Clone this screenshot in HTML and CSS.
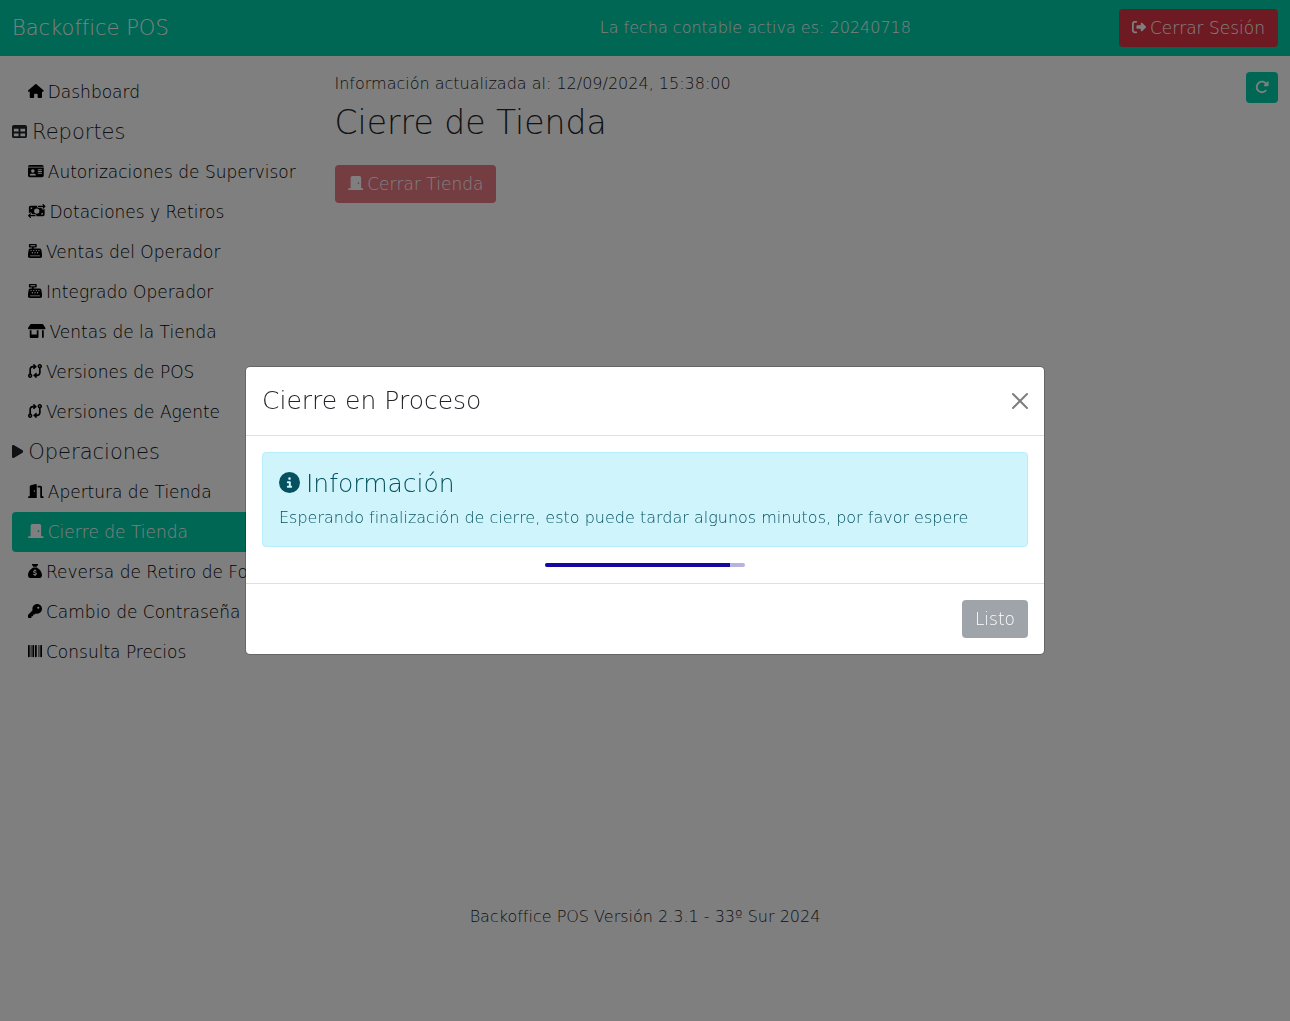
FILE: index.html
```html
<!DOCTYPE html>
<html lang="es">
<head>
<meta charset="utf-8">
<meta name="viewport" content="width=device-width, initial-scale=1">
<title>Backoffice POS</title>
<link rel="stylesheet" href="styles.css">
</head>
<body>
<svg class="sprite" aria-hidden="true">
  <symbol id="i-register" viewBox="0 0 512 512"><path d="M64 0C46.3 0 32 14.3 32 32V96c0 17.700 14.300 32 32 32h80v32H87c-31.600 0-58.500 23.100-63.300 54.400L1.100 364.100C.4 368.800 0 373.600 0 378.400V448c0 35.300 28.700 64 64 64H448c35.300 0 64-28.700 64-64V378.400c0-4.800-.4-9.600-1.100-14.400L488.200 214.400C483.500 183.100 456.600 160 425 160H208V128h80c17.700 0 32-14.300 32-32V32c0-17.700-14.300-32-32-32H64zM96 48H256c8.800 0 16 7.200 16 16s-7.200 16-16 16H96c-8.800 0-16-7.200-16-16s7.200-16 16-16zM64 432c0-8.800 7.200-16 16-16H432c8.800 0 16 7.200 16 16s-7.200 16-16 16H80c-8.800 0-16-7.200-16-16zm48-168a24 24 0 1 1 0-48 24 24 0 1 1 0 48zm120-24a24 24 0 1 1 -48 0 24 24 0 1 1 48 0zM160 344a24 24 0 1 1 0-48 24 24 0 1 1 0 48zM328 240a24 24 0 1 1 -48 0 24 24 0 1 1 48 0zM256 344a24 24 0 1 1 0-48 24 24 0 1 1 0 48zM424 240a24 24 0 1 1 -48 0 24 24 0 1 1 48 0zM352 344a24 24 0 1 1 0-48 24 24 0 1 1 0 48z"/></symbol>
  <symbol id="i-compare" viewBox="0 0 512 512"><path d="M320 488c0 9.500-5.600 18.100-14.200 21.900s-18.800 2.300-25.800-4.100l-80-72c-5.100-4.600-7.900-11-7.900-17.800s2.900-13.300 7.900-17.800l80-72c7-6.300 17.200-7.900 25.800-4.100s14.200 12.400 14.200 21.900v40h16c35.300 0 64-28.700 64-64V153.300C371.700 141 352 112.800 352 80c0-44.200 35.800-80 80-80s80 35.800 80 80c0 32.800-19.700 61-48 73.300V320c0 70.700-57.300 128-128 128H320v40zM456 80a24 24 0 1 0 -48 0 24 24 0 1 0 48 0zM192 24c0-9.500 5.600-18.100 14.200-21.900s18.800-2.300 25.800 4.100l80 72c5.100 4.600 7.900 11 7.900 17.800s-2.900 13.300-7.900 17.800l-80 72c-7 6.300-17.200 7.900-25.800 4.100s-14.200-12.400-14.200-21.900V128H176c-35.300 0-64 28.700-64 64V358.700c28.300 12.300 48 40.500 48 73.300c0 44.200-35.800 80-80 80s-80-35.800-80-80c0-32.800 19.700-61 48-73.300V192c0-70.700 57.300-128 128-128h16V24zM56 432a24 24 0 1 0 48 0 24 24 0 1 0 -48 0z"/></symbol>
  <symbol id="i-door" viewBox="0 0 576 512"><path d="M96 64c0-35.300 28.700-64 64-64H416c35.300 0 64 28.700 64 64V448h64c17.700 0 32 14.300 32 32s-14.300 32-32 32H432 144 32c-17.700 0-32-14.300-32-32s14.300-32 32-32H96V64zM384 288a32 32 0 1 0 0-64 32 32 0 1 0 0 64z"/></symbol>
</svg>

<header class="topbar">
  <a class="brand" href="#">Backoffice POS</a>
  <span class="active-date">La fecha contable activa es: 20240718</span>
  <button class="btn btn-danger" type="button"><svg class="icon" viewBox="0 0 512 512" aria-hidden="true"><path d="M377.900 105.900L500.700 228.700c7.200 7.200 11.300 17.100 11.300 27.300s-4.100 20.100-11.300 27.300L377.900 406.100c-6.400 6.400-15 9.900-24 9.900c-18.700 0-33.900-15.200-33.900-33.900l0-62.100-128 0c-17.700 0-32-14.300-32-32l0-64c0-17.700 14.300-32 32-32l128 0 0-62.100c0-18.700 15.200-33.900 33.900-33.900c9 0 17.600 3.600 24 9.900zM160 96L96 96c-17.700 0-32 14.300-32 32l0 256c0 17.700 14.300 32 32 32l64 0c17.700 0 32 14.300 32 32s-14.300 32-32 32l-64 0c-53 0-96-43-96-96L0 128C0 75 43 32 96 32l64 0c17.700 0 32 14.300 32 32s-14.300 32-32 32z"/></svg>Cerrar Sesión</button>
</header>

<div class="layout">
  <nav class="sidebar" aria-label="Menú principal">
    <a class="nav-link" href="#"><svg class="icon" viewBox="0 0 576 512" aria-hidden="true"><path d="M575.800 255.500c0 18-15 32.100-32 32.100h-32l.7 160.200c0 2.700-.2 5.400-.5 8.100V472c0 22.100-17.900 40-40 40H392c-22.100 0-40-17.900-40-40V384c0-17.700-14.300-32-32-32H256c-17.700 0-32 14.300-32 32v88c0 22.100-17.900 40-40 40H104c-22.100 0-40-17.900-40-40V287.600H32c-18 0-32-14-32-32.100c0-9 3-17 10-24L266.400 8c7-7 15-8 22-8s15 2 21 7L564.800 231.500c8 7 12 15 11 24z"/></svg>Dashboard</a>
    <h2 class="nav-heading"><svg class="icon" viewBox="0 0 512 512" aria-hidden="true"><path d="M64 256V160H224v96H64zm0 64H224v96H64V320zm224 96V320H448v96H288zM448 256H288V160H448v96zM64 32C28.700 32 0 60.700 0 96V416c0 35.300 28.700 64 64 64H448c35.300 0 64-28.700 64-64V96c0-35.300-28.700-64-64-64H64z"/></svg>Reportes</h2>
    <a class="nav-link" href="#"><svg class="icon" viewBox="0 0 576 512" aria-hidden="true"><path d="M0 96l576 0c0-35.300-28.700-64-64-64H64C28.700 32 0 60.700 0 96zm0 32V416c0 35.300 28.700 64 64 64H512c35.300 0 64-28.700 64-64V128H0zM64 405.300c0-29.500 23.900-53.300 53.300-53.300H234.700c29.500 0 53.300 23.900 53.300 53.300c0 5.900-4.800 10.700-10.700 10.700H74.700c-5.900 0-10.700-4.800-10.700-10.700zM176 192a64 64 0 1 1 0 128 64 64 0 1 1 0-128zm176 16c0-8.800 7.200-16 16-16H496c8.800 0 16 7.200 16 16s-7.200 16-16 16H368c-8.800 0-16-7.200-16-16zm0 64c0-8.800 7.200-16 16-16H496c8.800 0 16 7.200 16 16s-7.200 16-16 16H368c-8.800 0-16-7.200-16-16zm0 64c0-8.800 7.200-16 16-16H496c8.800 0 16 7.200 16 16s-7.200 16-16 16H368c-8.800 0-16-7.200-16-16z"/></svg>Autorizaciones de Supervisor</a>
    <a class="nav-link" href="#"><svg class="icon" viewBox="0 0 640 512" aria-hidden="true"><path d="M535 41c-9.400-9.400-9.400-24.600 0-33.900s24.600-9.400 33.900 0l64 64c4.500 4.500 7 10.600 7 17s-2.500 12.500-7 17l-64 64c-9.400 9.400-24.600 9.400-33.900 0s-9.400-24.600 0-33.900l23-23L384 112c-13.300 0-24-10.700-24-24s10.700-24 24-24l174.100 0L535 41zM105 377l-23 23L256 400c13.300 0 24 10.700 24 24s-10.700 24-24 24L81.900 448l23 23c9.400 9.400 9.400 24.600 0 33.900s-24.600 9.400-33.900 0L7 441c-4.500-4.500-7-10.600-7-17s2.500-12.500 7-17l64-64c9.400-9.400 24.600-9.400 33.900 0s9.400 24.600 0 33.900zM96 64H337.900c-3.700 7.200-5.900 15.300-5.900 24c0 28.700 23.300 52 52 52l117.400 0c-4 17 .6 35.500 13.800 48.800c20.300 20.300 53.200 20.300 73.500 0L608 169.500V384c0 35.300-28.700 64-64 64H302.100c3.700-7.200 5.900-15.300 5.900-24c0-28.700-23.300-52-52-52l-117.400 0c4-17-.6-35.500-13.800-48.800c-20.300-20.300-53.200-20.300-73.500 0L32 342.500V128c0-35.300 28.700-64 64-64zm64 64H96v64c35.300 0 64-28.700 64-64zM544 320c-35.300 0-64 28.700-64 64h64V320zM320 352a96 96 0 1 0 0-192 96 96 0 1 0 0 192z"/></svg>Dotaciones y Retiros</a>
    <a class="nav-link" href="#"><svg class="icon" viewBox="0 0 512 512" aria-hidden="true"><use href="#i-register"/></svg>Ventas del Operador</a>
    <a class="nav-link" href="#"><svg class="icon" viewBox="0 0 512 512" aria-hidden="true"><use href="#i-register"/></svg>Integrado Operador</a>
    <a class="nav-link" href="#"><svg class="icon" viewBox="0 0 640 512" aria-hidden="true"><path d="M36.800 192H603.200c20.300 0 36.800-16.500 36.800-36.800c0-7.300-2.200-14.400-6.200-20.400L558.200 21.400C549.300 8 534.400 0 518.300 0H121.700c-16 0-31 8-39.900 21.400L6.200 134.700c-4 6.100-6.200 13.200-6.200 20.400C0 175.500 16.500 192 36.800 192zM64 224V384v80c0 26.500 21.500 48 48 48H336c26.500 0 48-21.500 48-48V384 224H320V384H128V224H64zm448 0V480c0 17.700 14.300 32 32 32s32-14.300 32-32V224H512z"/></svg>Ventas de la Tienda</a>
    <a class="nav-link" href="#"><svg class="icon" viewBox="0 0 512 512" aria-hidden="true"><use href="#i-compare"/></svg>Versiones de POS</a>
    <a class="nav-link" href="#"><svg class="icon" viewBox="0 0 512 512" aria-hidden="true"><use href="#i-compare"/></svg>Versiones de Agente</a>
    <h2 class="nav-heading"><svg class="icon" viewBox="0 0 384 512" aria-hidden="true"><path d="M73 39c-14.800-9.100-33.400-9.400-48.500-.9S0 62.600 0 80V432c0 17.400 9.400 33.400 24.500 41.900s33.700 8.100 48.500-.9L361 297c14.300-8.700 23-24.200 23-41s-8.700-32.200-23-41L73 39z"/></svg>Operaciones</h2>
    <a class="nav-link" href="#"><svg class="icon" viewBox="0 0 576 512" aria-hidden="true"><path d="M320 32c0-9.900-4.500-19.200-12.300-25.200S289.800-1.400 280.200 1l-179.900 45C79 51.300 64 70.500 64 92.500V448H32c-17.700 0-32 14.300-32 32s14.300 32 32 32H96 288h32V480 32zM256 256c0 17.700-10.700 32-24 32s-24-14.300-24-32s10.700-32 24-32s24 14.300 24 32zm96-128h96V480c0 17.700 14.300 32 32 32h64c17.700 0 32-14.300 32-32s-14.300-32-32-32H512V128c0-35.300-28.700-64-64-64H352v64z"/></svg>Apertura de Tienda</a>
    <a class="nav-link is-active" href="#" aria-current="page"><svg class="icon" viewBox="0 0 576 512" aria-hidden="true"><use href="#i-door"/></svg>Cierre de Tienda</a>
    <a class="nav-link" href="#"><svg class="icon" viewBox="0 0 512 512" aria-hidden="true"><path d="M320 96H192L144.600 24.900C137.500 14.200 145.100 0 157.900 0H354.100c12.800 0 20.400 14.200 13.300 24.900L320 96zM192 128H320c3.800 2.500 8.100 5.300 13 8.400C389.700 172.700 512 250.900 512 416c0 53-43 96-96 96H96c-53 0-96-43-96-96C0 250.900 122.300 172.700 179 136.400c4.800-3.100 9.200-5.900 13-8.400zm84 88c0-11-9-20-20-20s-20 9-20 20v14c-7.600 1.700-15.200 4.400-22.200 8.500c-13.900 8.300-25.900 22.800-25.800 43.900c.1 20.300 12 33.100 24.700 40.700c11 6.600 24.700 10.800 35.600 14l1.700 .5c12.600 3.800 21.800 6.800 28 10.700c5.100 3.200 5.800 5.400 5.900 8.200c.1 5-1.800 8-5.900 10.500c-5 3.100-12.900 5-21.400 4.700c-11.100-.4-21.500-3.900-35.100-8.500c-2.300-.8-4.700-1.600-7.200-2.400c-10.500-3.500-21.800 2.200-25.300 12.600s2.200 21.800 12.600 25.300c1.900 .6 4 1.300 6.100 2.100c8.300 2.900 17.900 6.200 28.200 8.400V424c0 11 9 20 20 20s20-9 20-20V410.200c8-1.700 16-4.500 23.200-9c14.300-8.900 25.100-24.100 24.800-45c-.3-20.300-11.700-33.400-24.600-41.600c-11.500-7.200-25.900-11.600-37.100-15l-.7-.2c-12.800-3.900-21.900-6.700-28.300-10.500c-5.200-3.100-5.300-4.900-5.300-6.700c0-3.700 1.400-6.500 6.200-9.300c5.400-3.200 13.600-5.100 21.500-5c9.600 .1 20.200 2.200 31.200 5.200c10.700 2.800 21.600-3.500 24.500-14.200s-3.500-21.600-14.200-24.500c-6.500-1.700-13.700-3.400-21.100-4.700V216z"/></svg>Reversa de Retiro de Fondos</a>
    <a class="nav-link" href="#"><svg class="icon" viewBox="0 0 512 512" aria-hidden="true"><path d="M336 352c97.200 0 176-78.800 176-176S433.200 0 336 0S160 78.800 160 176c0 18.700 2.900 36.800 8.300 53.700L7 391c-4.500 4.500-7 10.600-7 17v80c0 13.300 10.700 24 24 24h80c13.300 0 24-10.700 24-24V448h40c13.300 0 24-10.700 24-24V384h40c6.400 0 12.500-2.500 17-7l33.300-33.300c16.900 5.400 35 8.300 53.700 8.300zM376 96a40 40 0 1 1 0 80 40 40 0 1 1 0-80z"/></svg>Cambio de Contraseña</a>
    <a class="nav-link" href="#"><svg class="icon" viewBox="0 0 512 512" aria-hidden="true"><path d="M24 32C10.700 32 0 42.700 0 56V456c0 13.300 10.700 24 24 24H40c13.300 0 24-10.700 24-24V56c0-13.300-10.700-24-24-24H24zm88 0c-8.800 0-16 7.200-16 16V464c0 8.800 7.200 16 16 16s16-7.200 16-16V48c0-8.800-7.200-16-16-16zm72 0c-13.300 0-24 10.700-24 24V456c0 13.300 10.700 24 24 24h16c13.300 0 24-10.700 24-24V56c0-13.300-10.700-24-24-24H184zm96 0c-13.300 0-24 10.700-24 24V456c0 13.300 10.700 24 24 24h16c13.300 0 24-10.700 24-24V56c0-13.300-10.700-24-24-24H280zM448 56V456c0 13.300 10.700 24 24 24h16c13.300 0 24-10.700 24-24V56c0-13.300-10.700-24-24-24H472c-13.300 0-24 10.700-24 24zm-64-8V464c0 8.800 7.200 16 16 16s16-7.200 16-16V48c0-8.800-7.200-16-16-16s-16 7.200-16 16z"/></svg>Consulta Precios</a>
  </nav>

  <main class="content">
    <div class="content-head">
      <div>
        <p class="updated">Información actualizada al: 12/09/2024, 15:38:00</p>
        <h1 class="page-title">Cierre de Tienda</h1>
      </div>
      <button class="btn btn-refresh" type="button" aria-label="Actualizar"><svg class="icon" viewBox="0 0 512 512" aria-hidden="true"><path d="M463.500 224H472c13.300 0 24-10.700 24-24V72c0-9.700-5.800-18.500-14.800-22.200s-19.300-1.700-26.200 5.200L413.400 96.600c-87.600-86.500-228.700-86.200-315.800 1c-87.500 87.500-87.500 229.300 0 316.800s229.300 87.500 316.800 0c12.500-12.500 12.500-32.800 0-45.300s-32.800-12.500-45.300 0c-62.500 62.500-163.800 62.500-226.300 0s-62.500-163.800 0-226.300c62.200-62.200 162.700-62.500 225.300-1L327 183c-6.900 6.900-8.900 17.200-5.200 26.200s12.500 14.800 22.200 14.800H463.500z"/></svg></button>
    </div>
    <button class="btn btn-danger" type="button" disabled><svg class="icon" viewBox="0 0 576 512" aria-hidden="true"><use href="#i-door"/></svg>Cerrar Tienda</button>
  </main>
</div>

<footer class="page-footer">Backoffice POS Versión 2.3.1 - 33º Sur 2024</footer>

<div class="backdrop">
  <section class="modal" role="dialog" aria-modal="true" aria-labelledby="modal-title">
    <header class="modal-header">
      <h2 class="modal-title" id="modal-title">Cierre en Proceso</h2>
      <button class="btn-close" type="button" aria-label="Cerrar"><svg viewBox="0 0 16 16" aria-hidden="true"><path d="M1 1L15 15M15 1L1 15"/></svg></button>
    </header>
    <div class="modal-body">
      <div class="alert" role="alert">
        <h3 class="alert-title"><svg class="icon" viewBox="0 0 512 512" aria-hidden="true"><path d="M256 512A256 256 0 1 0 256 0a256 256 0 1 0 0 512zM216 336h24V272H216c-13.300 0-24-10.700-24-24s10.700-24 24-24h48c13.300 0 24 10.700 24 24v88h8c13.300 0 24 10.700 24 24s-10.700 24-24 24H216c-13.300 0-24-10.700-24-24s10.700-24 24-24zm40-208a32 32 0 1 1 0 64 32 32 0 1 1 0-64z"/></svg>Información</h3>
        <p>Esperando finalización de cierre, esto puede tardar algunos minutos, por favor espere</p>
      </div>
      <div class="loader" role="progressbar" aria-label="Cierre en proceso"><div class="loader-bar"></div></div>
    </div>
    <footer class="modal-footer">
      <button class="btn btn-secondary" type="button" disabled>Listo</button>
    </footer>
  </section>
</div>
</body>
</html>
```

FILE: styles.css
```css
:root {
  --teal: #00cfa8;
  --ink: #212529;
  --line: #dfdfdf;
  --text: 16px;
  --text-control: 17px;
  --text-heading: 21px;
  --text-title: 25px;
}

* {
  box-sizing: border-box;
}

body {
  margin: 0;
  background: #fff;
  color: var(--ink);
  font-family: "DejaVu Sans", sans-serif;
  font-weight: 200;
  font-size: var(--text);
  line-height: 24px;
}

h1, h2, h3, p {
  margin: 0;
  font-weight: inherit;
}

.sprite {
  display: none;
}

.icon {
  flex: none;
  height: 14px;
  margin-bottom: 2px;
  fill: currentColor;
}

/* Buttons */
.btn {
  display: inline-flex;
  align-items: center;
  gap: 4px;
  padding: 6px 12px;
  border: 1px solid transparent;
  border-radius: 4px;
  color: #fff;
  font: inherit;
  font-size: var(--text-control);
  white-space: nowrap;
}

.btn:disabled {
  opacity: 0.65;
}

.btn-danger {
  background: #dc3545;
}

.btn-secondary {
  background: #6c757d;
}

.btn-refresh {
  padding: 7px 8px 6px;
  background: var(--teal);
}

/* Top bar */
.topbar {
  display: flex;
  align-items: center;
  min-height: 56px;
  padding: 0 12px;
  background: var(--teal);
  color: #fff;
}

.brand {
  flex: 0 0 30%;
  color: inherit;
  font-size: var(--text-heading);
  text-decoration: none;
}

.active-date {
  flex: 1;
  text-align: center;
}

/* Page columns */
.layout {
  display: grid;
  grid-template-columns: minmax(0, 1fr) minmax(0, 3fr);
  min-height: 80vh;
}

.sidebar {
  padding: 16px 12px;
}

.nav-link,
.nav-heading {
  display: flex;
  align-items: center;
  gap: 4px;
  height: 40px;
}

.nav-link {
  padding: 0 16px;
  border-radius: 4px;
  color: #000;
  font-size: var(--text-control);
  text-decoration: none;
  white-space: nowrap;
}

.nav-link.is-active {
  background: var(--teal);
  color: #fff;
}

.nav-heading {
  gap: 5px;
  font-size: var(--text-heading);
}

.nav-heading .icon {
  height: 15px;
}

.content {
  padding: 16px 12px;
}

.content-head {
  display: flex;
  align-items: flex-start;
  justify-content: space-between;
  margin-bottom: 16px;
}

.page-title {
  font-size: 33px;
  line-height: 53px;
}

.page-footer {
  padding: 32px 12px 92px;
  text-align: center;
}

/* Modal */
.backdrop {
  position: fixed;
  inset: 0;
  display: flex;
  align-items: center;
  justify-content: center;
  background: rgba(0, 0, 0, 0.5);
}

.modal {
  width: 100%;
  max-width: 800px;
  border: 1px solid rgba(0, 0, 0, 0.2);
  border-radius: 5px;
  background: #fff;
  background-clip: padding-box;
}

.modal-header {
  display: flex;
  align-items: center;
  justify-content: space-between;
  padding: 16px;
  border-bottom: 1px solid var(--line);
}

.modal-title {
  font-size: var(--text-title);
  line-height: 36px;
}

.btn-close {
  display: flex;
  padding: 0;
  border: 0;
  background: none;
  opacity: 0.5;
}

.btn-close svg {
  width: 16px;
  height: 16px;
  fill: none;
  stroke: #000;
  stroke-width: 2;
  stroke-linecap: round;
}

.modal-body {
  display: grid;
  gap: 16px;
  padding: 16px;
}

.alert {
  padding: 16px;
  border: 1px solid #b6effb;
  border-radius: 4px;
  background: #cff4fc;
  color: #055160;
}

.alert-title {
  display: flex;
  align-items: center;
  gap: 6px;
  margin-bottom: 8px;
  font-size: var(--text-title);
  line-height: 29px;
}

.alert-title .icon {
  height: 21px;
}

.loader {
  justify-self: center;
  width: 200px;
  height: 4px;
  overflow: hidden;
  border-radius: 2px;
  background: #b7b2e0;
}

.loader-bar {
  width: 185px;
  height: 100%;
  background: #1509a0;
}

.modal-footer {
  display: flex;
  justify-content: flex-end;
  padding: 16px;
  border-top: 1px solid var(--line);
}
```
